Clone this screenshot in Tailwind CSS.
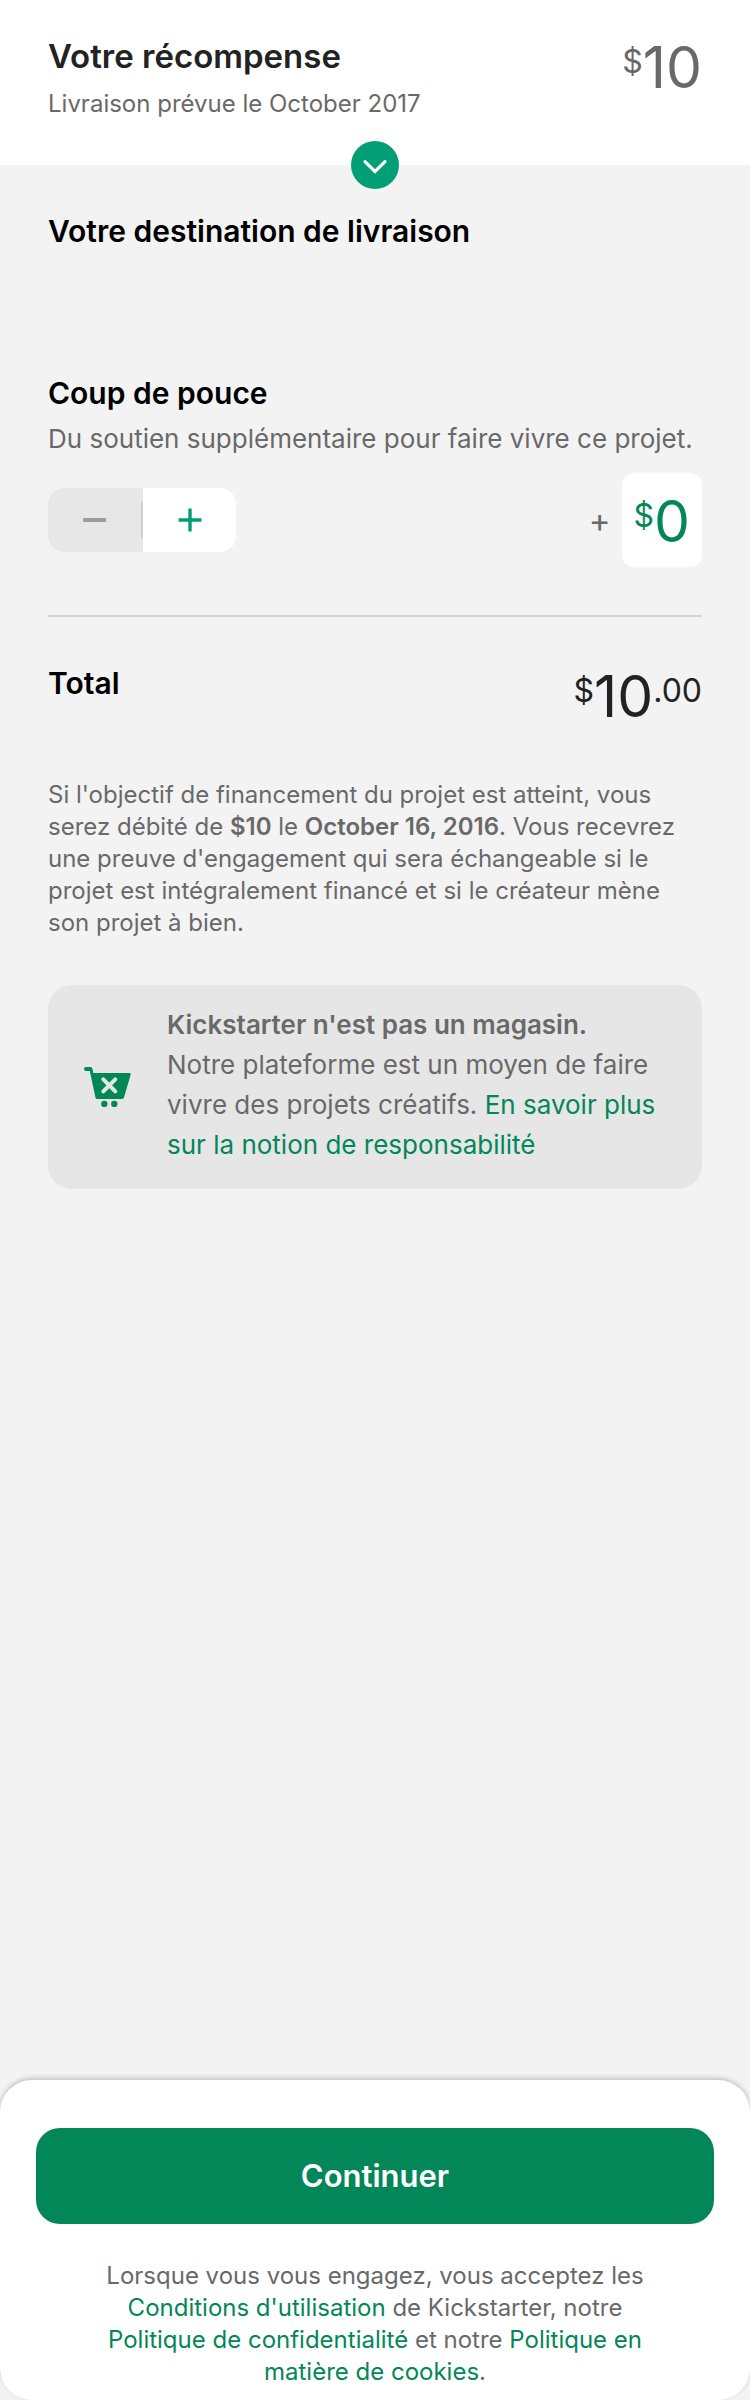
<!DOCTYPE html>
<html lang="fr">
<head>
<meta charset="utf-8">
<meta name="viewport" content="width=device-width, initial-scale=1">
<title>Votre récompense</title>
<script src="https://cdn.jsdelivr.net/npm/@tailwindcss/browser@4"></script>
</head>
<body class="flex min-h-screen flex-col bg-[#f3f3f3] font-['Inter',sans-serif] text-[24px] leading-8 text-[#696969]">
  <header class="relative flex items-start justify-between bg-white px-12 pt-9 pb-[45px]">
    <div>
      <h1 class="text-[33px] leading-10 font-semibold text-[#222]">Votre récompense</h1>
      <p class="mt-3">Livraison prévue le October 2017</p>
    </div>
    <p class="flex items-start text-[57px] leading-16"><span class="pt-1.5 text-[32px] leading-10">$</span>10</p>
    <button type="button" aria-label="Afficher la récompense" class="absolute -bottom-6 left-1/2 flex size-12 -translate-x-1/2 items-center justify-center rounded-full bg-[#029f76]">
      <svg class="size-12" viewBox="0 0 48 48" fill="none" stroke="#fff" stroke-width="3.2" stroke-linecap="round" stroke-linejoin="miter" aria-hidden="true"><path d="M14 20.700 24 30.500l10-9.800"/></svg>
    </button>
  </header>

  <main class="px-12 pt-12">
    <h2 class="text-[30px] leading-9 font-semibold text-black">Votre destination de livraison</h2>

    <section class="mt-[126px]">
      <h2 class="text-[30px] leading-9 font-semibold text-black">Coup de pouce</h2>
      <p class="mt-3 text-[26px]">Du soutien supplémentaire pour faire vivre ce projet.</p>
      <div class="mt-[18px] flex items-center justify-between">
        <div class="flex h-16 w-[188px] overflow-hidden rounded-2xl bg-white">
          <button type="button" disabled aria-label="Diminuer" class="flex w-[95px] items-center bg-[#e7e7e7]">
            <svg class="ml-[34px] size-6" viewBox="0 0 24 24" stroke="#9d9f9e" stroke-width="4" stroke-linecap="butt" aria-hidden="true"><path d="M1 12h23"/></svg>
            <span class="ml-auto h-9 w-0.5 bg-[#cfcfcf]"></span>
          </button>
          <button type="button" aria-label="Augmenter" class="flex flex-1 items-center justify-center">
            <svg class="size-6" viewBox="0 0 24 24" stroke="#029f76" stroke-width="3.4" aria-hidden="true"><path d="M.5 12h23M12 .5v23"/></svg>
          </button>
        </div>
        <div class="flex items-center gap-[11px]">
          <span class="text-[33px]">+</span>
          <p class="flex h-[94px] items-start rounded-xl bg-white px-3 pt-[17px] text-[57px] leading-16 text-[#038759]"><span class="pt-1.5 text-[32px] leading-10">$</span>0</p>
        </div>
      </div>
    </section>

    <section class="mt-12 flex items-start justify-between border-t-2 border-[#d1d1d1] pt-12">
      <h2 class="text-[30px] leading-9 font-semibold text-black">Total</h2>
      <p class="flex items-start text-[57px] leading-16 text-[#222]"><span class="pt-1.5 text-[32px] leading-10">$</span>10<span class="pt-1.5 text-[32px] leading-10">.00</span></p>
    </section>

    <p class="mt-[50px]">Si l'objectif de financement du projet est atteint, vous<br>serez débité de <strong class="font-semibold">$10</strong> le <strong class="font-semibold">October 16, 2016</strong>. Vous recevrez<br>une preuve d'engagement qui sera échangeable si le<br>projet est intégralement financé et si le créateur mène<br>son projet à bien.</p>

    <aside class="mt-[46px] flex items-center rounded-3xl bg-[#e6e6e6] pt-5 pr-10 pb-6 pl-9">
      <svg class="mt-1 h-10 w-12 shrink-0" viewBox="0 0 48 40" aria-hidden="true">
        <path fill="#038759" d="M2 0H6.500Q8 0 8.400 1.500L9.300 6H45.500Q47.200 6 46.700 7.600L40 30.600Q39.500 32 38 32H13Q11.800 32 11.500 30.800L5.800 4H2Q0 4 0 2T2 0Z"/>
        <circle cx="20.300" cy="37" r="3.200" fill="#038759"/><circle cx="30.300" cy="37" r="3.200" fill="#038759"/>
        <path d="m19.300 12.300 12 12m0-12-12 12" stroke="#e6e6e6" stroke-width="4" stroke-linecap="round"/>
      </svg>
      <p class="ml-[35px] text-[26px] leading-10"><strong class="font-semibold">Kickstarter n'est pas un magasin.</strong><br>Notre plateforme est un moyen de faire<br>vivre des projets créatifs. <a href="#" class="text-[#038759]">En savoir plus<br>sur la notion de responsabilité</a></p>
    </aside>
  </main>

  <footer class="mt-auto rounded-4xl bg-white px-9 pt-12 pb-3 text-center shadow-[0_-2px_5px_rgba(0,0,0,0.2)]">
    <button type="button" class="h-24 w-full rounded-3xl bg-[#038759] text-[31px] font-semibold text-white">Continuer</button>
    <p class="mt-9">Lorsque vous vous engagez, vous acceptez les<br><a href="#" class="text-[#038759]">Conditions d'utilisation</a> de Kickstarter, notre<br><a href="#" class="text-[#038759]">Politique de confidentialité</a> et notre <a href="#" class="text-[#038759]">Politique en<br>matière de cookies</a>.</p>
  </footer>
</body>
</html>
